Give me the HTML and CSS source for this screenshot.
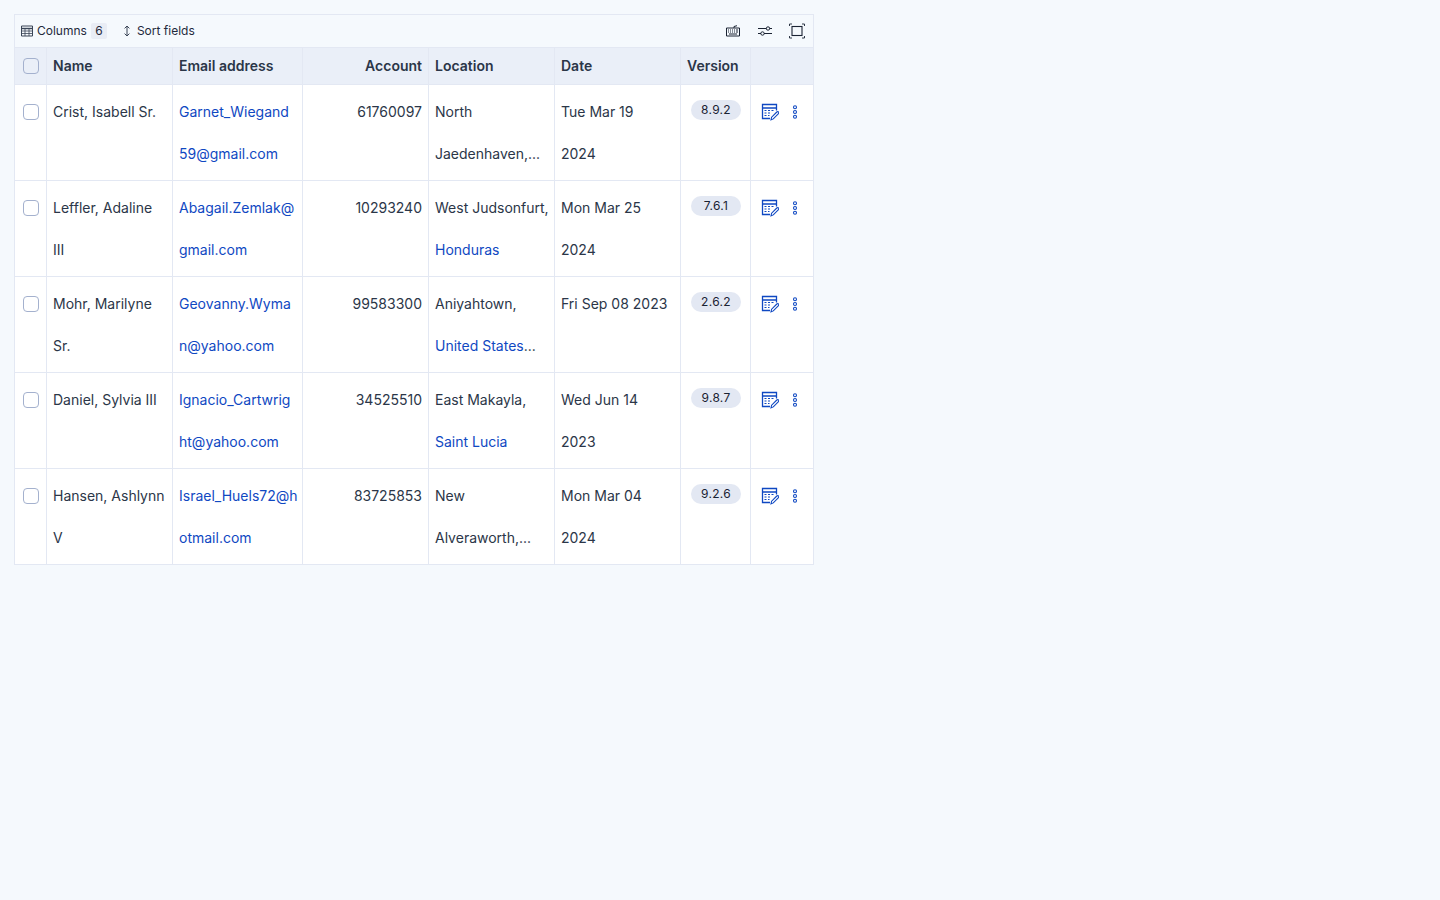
FILE: index.html
```html
<!DOCTYPE html>
<html lang="en">
<head>
<meta charset="utf-8">
<title>Table</title>
<link rel="stylesheet" href="styles.css">
</head>
<body>
<svg class="defs" width="0" height="0" aria-hidden="true">
  <symbol id="edit" viewBox="0 0 18 18">
    <path d="M9 15.5H1.5V1.5H15.5V7.5M1.5 5H15.5" fill="none" stroke="currentColor" stroke-width="1.3"/>
    <path d="M3.5 7.5h2M7 7.5h2M10.5 7.5h2M3.5 10h2M7 10h2M3.5 12.5h2M7 12.5h1.5" fill="none" stroke="currentColor" stroke-width="1.1"/>
    <path d="M10 16.8l.6-2.6 5.2-5.2a1.2 1.2 0 0 1 1.7 1.7l-5.2 5.2z" fill="none" stroke="currentColor" stroke-width="1.1"/>
  </symbol>
  <symbol id="dots" viewBox="0 0 6 14">
    <circle cx="3" cy="2.2" r="1.5" fill="none" stroke="currentColor" stroke-width="1.1"/>
    <circle cx="3" cy="7" r="1.5" fill="none" stroke="currentColor" stroke-width="1.1"/>
    <circle cx="3" cy="11.8" r="1.5" fill="none" stroke="currentColor" stroke-width="1.1"/>
  </symbol>
</svg>
<main class="table">
  <div class="toolbar">
    <div class="tool-group">
      <button class="tool">
        <svg class="tool-icon" width="12" height="12" viewBox="0 0 12 12"><path d="M.5 1h11v10H.5z" fill="none" stroke="currentColor"/><path d="M.5 3.5h11" stroke="currentColor" stroke-width="1.4"/><path d="M1 6h10M1 8.5h10M4 3.5V11M8 3.5V11" stroke="currentColor" stroke-width=".8"/></svg>
        <span>Columns</span><span class="count">6</span>
      </button>
      <button class="tool">
        <svg class="tool-icon sort" width="8" height="12" viewBox="0 0 8 12"><path d="M1.6 3.4L4 1l2.4 2.4M1.6 8.6L4 11l2.4-2.4M4 1v10" fill="none" stroke="currentColor" stroke-width="1"/></svg>
        <span>Sort fields</span>
      </button>
    </div>
    <div class="tool-group end">
      <svg width="16" height="16" viewBox="0 0 16 16"><path d="M1.5 5h13v8h-13z" fill="none" stroke="currentColor"/><path d="M3 7h1M5 7h1M7 7h1M9 7h1M11 7h2M3 9h1M5 9h1M7 9h1M9 9h1M11 9h2M4 11h8M9 5V3.5l3-.8" fill="none" stroke="currentColor"/></svg>
      <svg width="16" height="16" viewBox="0 0 16 16"><path d="M1 5.500h8.500M12.500 5.500H15M1 10.500h3M7 10.500h8" fill="none" stroke="currentColor"/><circle cx="11" cy="5.500" r="1.700" fill="none" stroke="currentColor"/><circle cx="5.500" cy="10.500" r="1.700" fill="none" stroke="currentColor"/></svg>
      <svg width="16" height="16" viewBox="0 0 16 16"><rect x="3" y="3.500" width="10" height="9" fill="none" stroke="currentColor" stroke-width="1.100"/><path d="M.5 3V1h2.500M13 1h2.500v2M15.500 13v2H13M3 15H.5v-2" fill="none" stroke="currentColor" stroke-width=".9"/></svg>
    </div>
  </div>
  <div class="row head">
    <div class="cell check"><span class="box"></span></div>
    <div class="cell">Name</div>
    <div class="cell">Email address</div>
    <div class="cell num">Account</div>
    <div class="cell">Location</div>
    <div class="cell">Date</div>
    <div class="cell">Version</div>
    <div class="cell"></div>
  </div>
  <div class="row">
    <div class="cell check"><span class="box"></span></div>
    <div class="cell">Crist, Isabell Sr.</div>
    <div class="cell"><a class="link">Garnet_Wiegand<br>59@gmail.com</a></div>
    <div class="cell num">61760097</div>
    <div class="cell">North<br>Jaedenhaven,...</div>
    <div class="cell">Tue Mar 19<br>2024</div>
    <div class="cell ver"><span class="pill">8.9.2</span></div>
    <div class="cell acts"><svg class="edit"><use href="#edit"/></svg><svg class="dots"><use href="#dots"/></svg></div>
  </div>
  <div class="row">
    <div class="cell check"><span class="box"></span></div>
    <div class="cell">Leffler, Adaline<br>III</div>
    <div class="cell"><a class="link">Abagail.Zemlak@<br>gmail.com</a></div>
    <div class="cell num">10293240</div>
    <div class="cell">West Judsonfurt,<br><a class="link">Honduras</a></div>
    <div class="cell">Mon Mar 25<br>2024</div>
    <div class="cell ver"><span class="pill">7.6.1</span></div>
    <div class="cell acts"><svg class="edit"><use href="#edit"/></svg><svg class="dots"><use href="#dots"/></svg></div>
  </div>
  <div class="row">
    <div class="cell check"><span class="box"></span></div>
    <div class="cell">Mohr, Marilyne<br>Sr.</div>
    <div class="cell"><a class="link">Geovanny.Wyma<br>n@yahoo.com</a></div>
    <div class="cell num">99583300</div>
    <div class="cell">Aniyahtown,<br><a class="link">United States</a>...</div>
    <div class="cell">Fri Sep 08 2023</div>
    <div class="cell ver"><span class="pill">2.6.2</span></div>
    <div class="cell acts"><svg class="edit"><use href="#edit"/></svg><svg class="dots"><use href="#dots"/></svg></div>
  </div>
  <div class="row">
    <div class="cell check"><span class="box"></span></div>
    <div class="cell">Daniel, Sylvia III</div>
    <div class="cell"><a class="link">Ignacio_Cartwrig<br>ht@yahoo.com</a></div>
    <div class="cell num">34525510</div>
    <div class="cell">East Makayla,<br><a class="link">Saint Lucia</a></div>
    <div class="cell">Wed Jun 14<br>2023</div>
    <div class="cell ver"><span class="pill">9.8.7</span></div>
    <div class="cell acts"><svg class="edit"><use href="#edit"/></svg><svg class="dots"><use href="#dots"/></svg></div>
  </div>
  <div class="row">
    <div class="cell check"><span class="box"></span></div>
    <div class="cell">Hansen, Ashlynn<br>V</div>
    <div class="cell"><a class="link">Israel_Huels72@h<br>otmail.com</a></div>
    <div class="cell num">83725853</div>
    <div class="cell">New<br>Alveraworth,...</div>
    <div class="cell">Mon Mar 04<br>2024</div>
    <div class="cell ver"><span class="pill">9.2.6</span></div>
    <div class="cell acts"><svg class="edit"><use href="#edit"/></svg><svg class="dots"><use href="#dots"/></svg></div>
  </div>
</main>
</body>
</html>
```
FILE: styles.css
```css
* { box-sizing: border-box; }
html, body { height: 100%; }
body {
  margin: 0;
  padding: 14px;
  background: #f5f9fd;
  font-family: Inter, "Liberation Sans", sans-serif;
  font-size: 14px;
  color: #2b3648;
}
.defs { position: absolute; }
.table {
  width: 800px;
  border: 1px solid #e3e8f3;
  background: #fff;
}
.toolbar {
  height: 33px;
  padding: 0 8px 0 6px;
  display: flex;
  justify-content: space-between;
  align-items: center;
  background: #f5f9fd;
  border-bottom: 1px solid #e3e8f3;
}
.tool-group { display: flex; align-items: center; gap: 14px; }
.tool-group.end { gap: 16px; color: #1a2333; padding-right: 0; }
.tool {
  display: flex;
  align-items: center;
  gap: 4px;
  padding: 0;
  border: 0;
  background: none;
  font: inherit;
  font-size: 12px;
  line-height: 16px;
  color: #1f2a3c;
}
.tool-icon { color: #3a4557; }
.sort { margin: 0 2px; }
.count {
  margin-left: 0;
  min-width: 16px;
  height: 16px;
  border-radius: 2px;
  background: #e9edf5;
  text-align: center;
}
.row {
  display: grid;
  grid-template-columns: 31px 126px 130px 126px 126px 126px 70px 63px;
  height: 96px;
  border-bottom: 1px solid #e3e8f3;
}
.row:last-child { border-bottom: 0; height: 95px; }
.head {
  height: 37px;
  background: #eaeff8;
  font-weight: 600;
}
.cell {
  padding: 6px 6px 0;
  line-height: 42px;
  border-left: 1px solid #e3e8f3;
  white-space: nowrap;
  overflow: hidden;
  letter-spacing: 0;
}
.cell:first-child { border-left: 0; }
.head .cell {
  padding-top: 0;
  line-height: 36px;
}
.num { text-align: right; }
.check { padding: 0; display: flex; justify-content: center; }
.box {
  width: 16px;
  height: 16px;
  margin-top: 19px;
  background: #fff;
  border: 1px solid #a4b1ce;
  border-radius: 4px;
}
.head .box { margin-top: 10px; background: #eaeff8; }
.link { color: #0f48c2; }
.ver { padding: 15px 0 0 10px; line-height: 20px; }
.pill {
  display: block;
  width: 50px;
  height: 20px;
  border-radius: 10px;
  background: #e3e8f3;
  text-align: center;
  font-size: 12px;
  line-height: 20px;
  letter-spacing: .3px;
  color: #1a2333;
}
.acts {
  padding: 18px 0 0 10px;
  display: flex;
  align-items: flex-start;
  color: #0f48c2;
  line-height: 0;
}
.edit { width: 18px; height: 18px; }
.dots { width: 6px; height: 14px; margin: 2px 0 0 13px; }
```
